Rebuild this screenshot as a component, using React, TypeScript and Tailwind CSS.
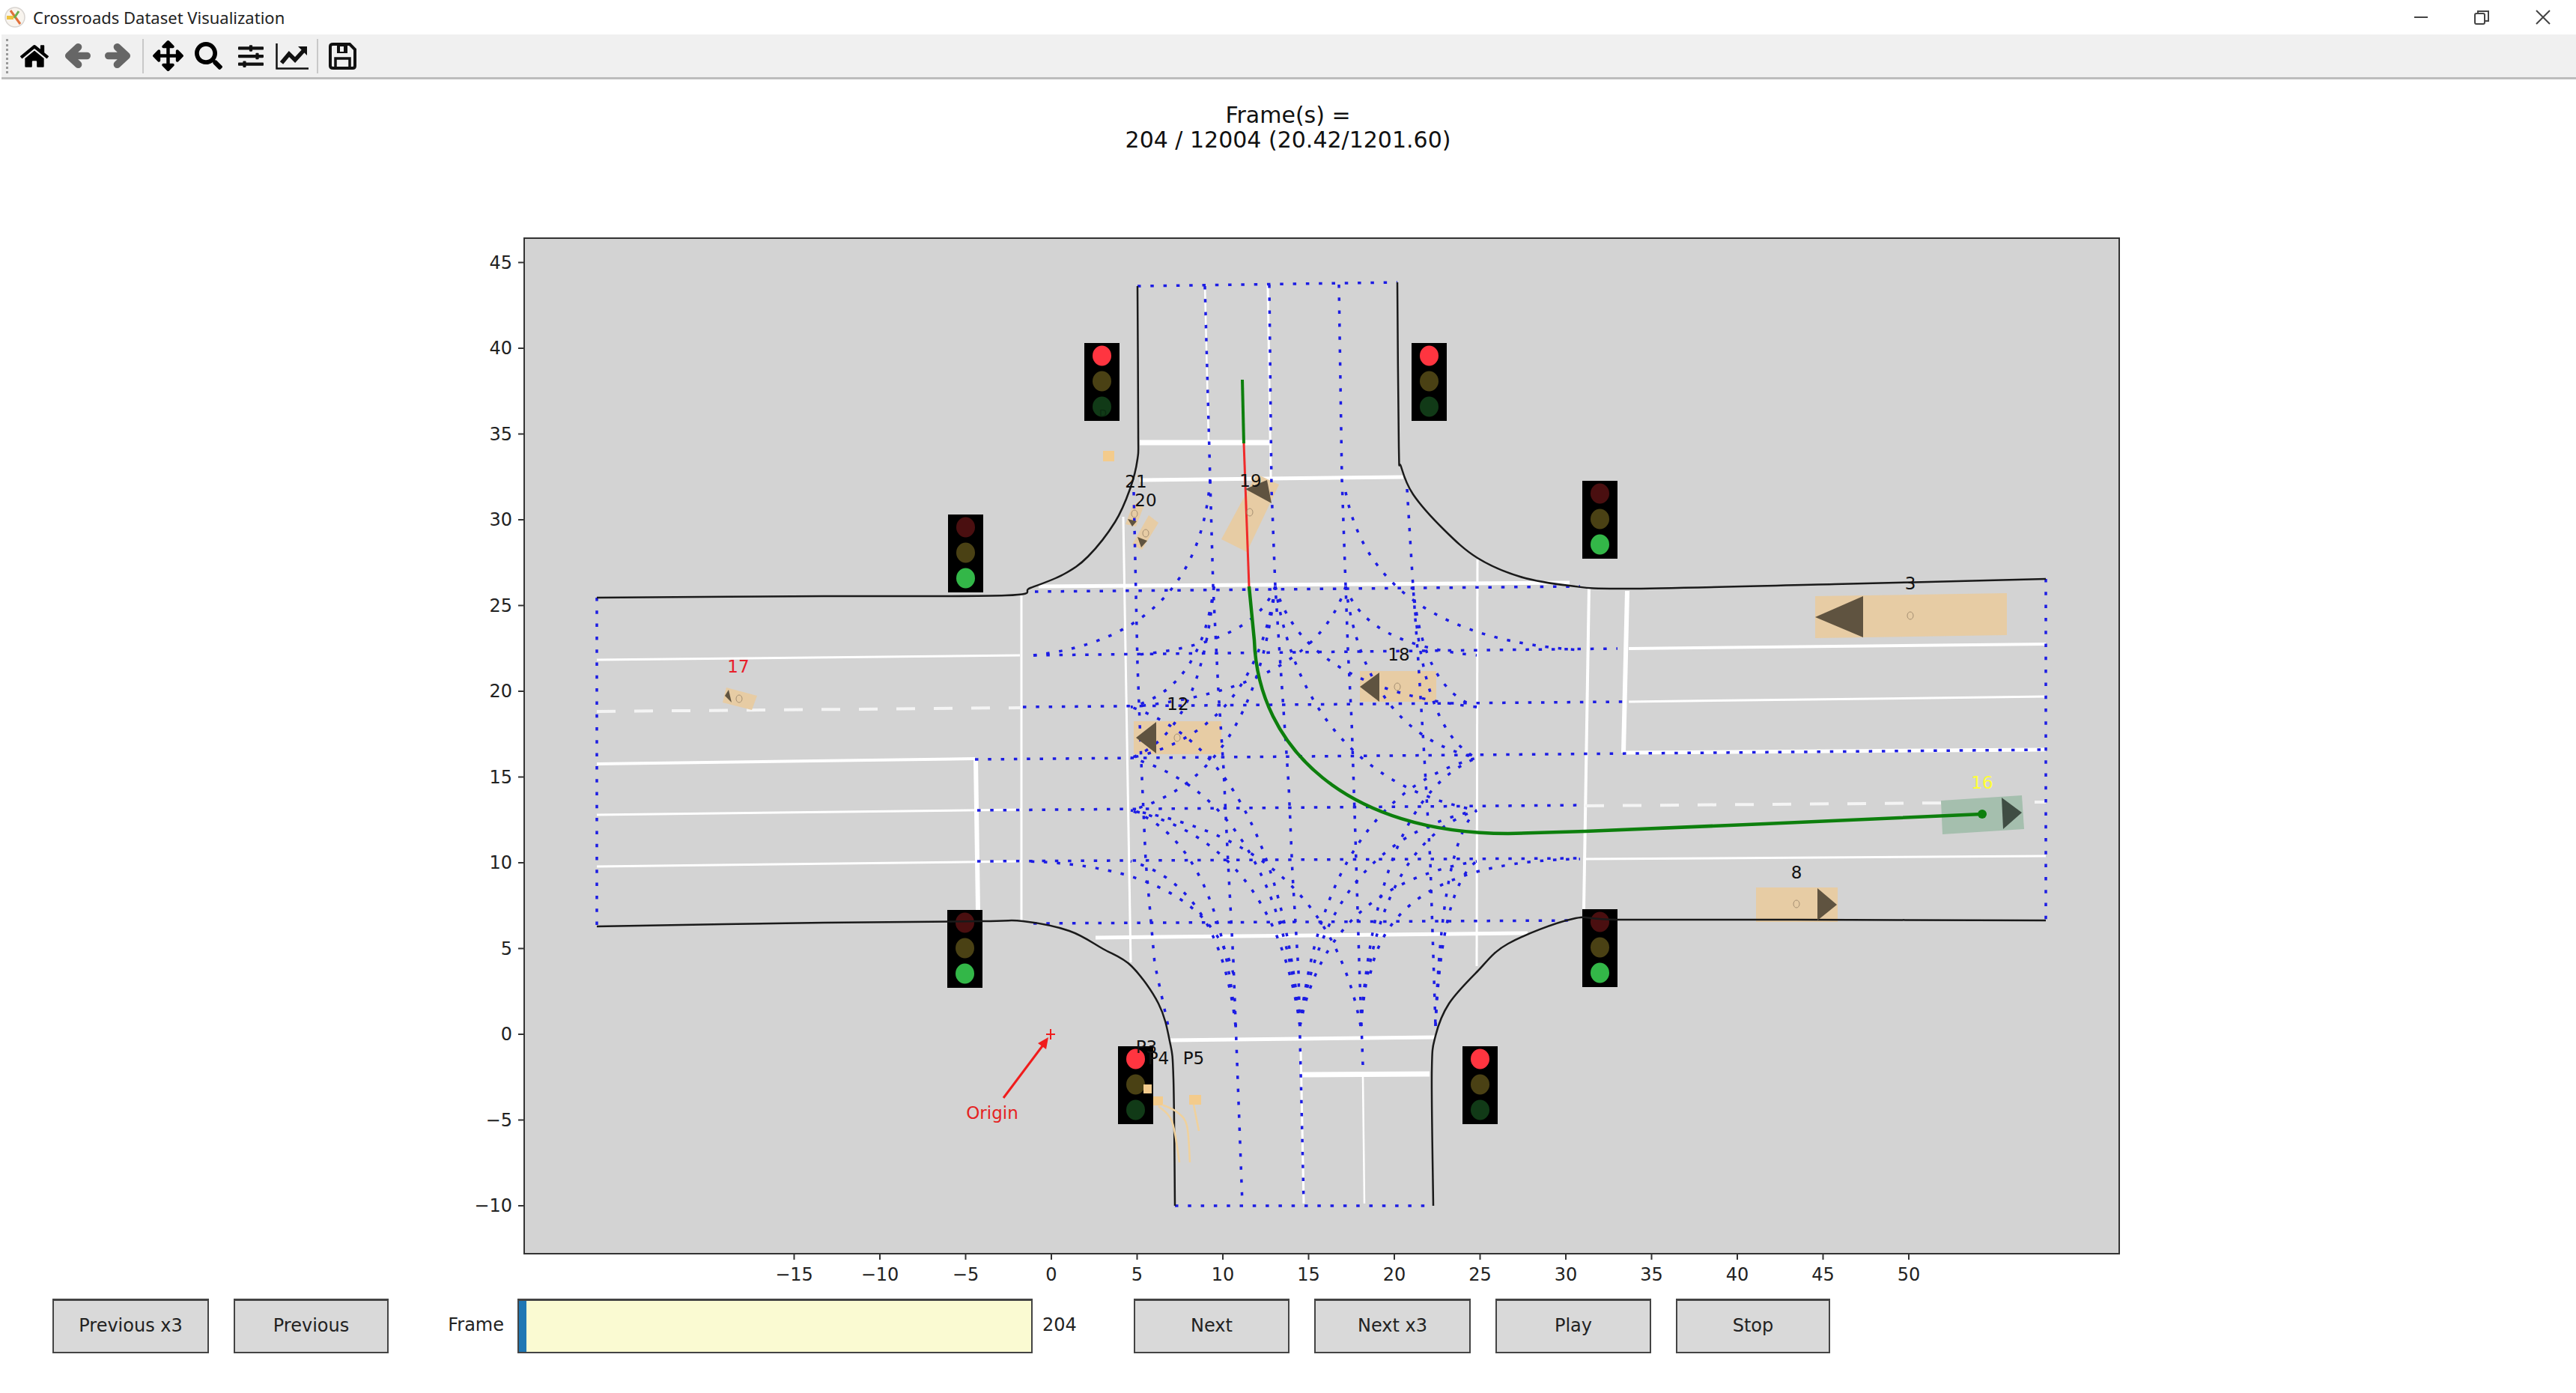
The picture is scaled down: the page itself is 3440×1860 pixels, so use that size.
import { FaHome, FaArrowsAlt, FaSearch, FaSlidersH } from "react-icons/fa";

type P = [number, number];

// plot coords are page pixels, the svg viewBox starts at 620,300
const toX = (v: number) => 1404 + 22.9 * v;
const toY = (v: number) => 1381 - 22.9 * v;

function smooth(pts: P[]) {
  let d = `M${pts[0][0]} ${pts[0][1]}`;
  for (let i = 0; i < pts.length - 1; i++) {
    const p0 = pts[Math.max(0, i - 1)];
    const p1 = pts[i];
    const p2 = pts[i + 1];
    const p3 = pts[Math.min(pts.length - 1, i + 2)];
    const c1 = [p1[0] + (p2[0] - p0[0]) / 6, p1[1] + (p2[1] - p0[1]) / 6];
    const c2 = [p2[0] - (p3[0] - p1[0]) / 6, p2[1] - (p3[1] - p1[1]) / 6];
    d += ` C${c1[0]} ${c1[1]} ${c2[0]} ${c2[1]} ${p2[0]} ${p2[1]}`;
  }
  return d;
}

const borders: P[][] = [
  [[797, 798], [1100, 796], [1343, 795], [1376, 785], [1420, 767], [1453, 743], [1489, 697], [1509, 653], [1519, 613], [1520, 573], [1519, 382]],
  [[1866, 377], [1868, 597], [1871, 623], [1887, 660], [1928, 707], [1973, 745], [2030, 770], [2096, 782], [2173, 786], [2450, 780], [2732, 773]],
  [[797, 1237], [1100, 1232], [1313, 1230], [1366, 1230], [1428, 1243], [1473, 1267], [1511, 1290], [1547, 1340], [1562, 1390], [1567, 1440], [1569, 1610]],
  [[2732, 1229], [2400, 1228], [2161, 1228], [2100, 1227], [2014, 1260], [1973, 1297], [1935, 1340], [1917, 1383], [1912, 1433], [1914, 1610]],
];

// x1 y1 x2 y2 width
const whites: number[][] = [
  [797, 881, 1362, 875, 3], [797, 1020, 1302, 1013, 4], [797, 1088, 1365, 1081, 3], [797, 1157, 1365, 1150, 3],
  [2175, 866, 2732, 860, 4], [2175, 937, 2732, 930, 3], [2168, 1005, 2732, 1001, 5], [2115, 1147, 2732, 1143, 3],
  [1364, 793, 1364, 1230, 3], [1303, 1013, 1306, 1215, 6], [1500, 690, 1510, 1285, 3], [1973, 747, 1972, 1290, 3],
  [2122, 784, 2115, 1214, 4], [2173, 789, 2168, 1005, 6],
  [1522, 591, 1695, 591, 7], [1522, 641, 1874, 637, 5], [1387, 783, 2096, 778, 5], [1463, 1252, 2040, 1246, 5],
  [1562, 1389, 1917, 1385, 5], [1736, 1435, 1909, 1434, 7],
  [1609, 380, 1614, 590, 2.5], [1693, 380, 1697, 637, 3], [1737, 1400, 1741, 1607, 3], [1820, 1438, 1822, 1607, 2.5],
];
const dashed: number[][] = [
  [797, 950, 1364, 945],
  [2117, 1076, 2732, 1071],
];

const q = (a: P, b: P, c: P) => `M${a[0]} ${a[1]} Q${b[0]} ${b[1]} ${c[0]} ${c[1]}`;
// bend from a vertical lane into a horizontal one
const bend = (a: P, b: P) => q(a, [a[0] * 0.85 + b[0] * 0.15, b[1] * 0.85 + a[1] * 0.15], b);

const blueStraight = [
  "M797 798 L797 1237", "M2732 773 L2732 1229", "M1519 382 L1866 377", "M1569 1610 L1914 1610",
  "M1382 790 L2110 783", "M1380 875 L2160 866", "M1366 944 L2168 937", "M1302 1014 L2732 1001",
  "M1305 1082 L2117 1075", "M1305 1150 L2113 1146", "M1380 1233 L2102 1229",
  "M1514 657 L1519 887 L1524 1017 L1530 1150 L1542 1287 L1560 1370",
  "M1609 382 L1616 640 L1620 783 L1627 922 L1634 1027 L1639 1133 L1647 1283 L1659 1607",
  "M1695 380 L1698 653 L1703 783 L1708 860 L1721 1050 L1726 1167 L1734 1297 L1741 1607",
  "M1788 380 L1792 640 L1797 783 L1800 867 L1805 963 L1810 1117 L1815 1283 L1820 1423",
  "M1879 653 L1887 783 L1894 883 L1902 1010 L1910 1150 L1917 1370",
];

const n2: P = [1621, 783];
const n3: P = [1703, 783];
const n4: P = [1797, 783];
const n5: P = [1887, 783];
const s2: P = [1650, 1370];
const s3: P = [1736, 1370];
const s4: P = [1817, 1370];
const s5: P = [1917, 1370];
const wIn = (y: number): P => [1510, y];
const eIn = (y: number): P => [1972, y];

const blueCurves = [
  // wide corners that start on the arms
  q([1616, 640], [1600, 850], [1380, 875]),
  q([1797, 657], [1835, 850], [2110, 868]),
  q([1647, 1300], [1610, 1155], [1366, 1150]),
  q([1830, 1300], [1860, 1150], [2110, 1147]),
  // inner paths, north
  bend(n2, wIn(944)), bend(n2, wIn(1012)), bend(n3, wIn(875)), bend(n3, wIn(1012)), bend(n3, wIn(1082)),
  bend(n4, wIn(944)), bend(n4, eIn(875)), bend(n4, eIn(1012)), bend(n3, eIn(944)), bend(n3, eIn(1082)),
  bend(n5, eIn(944)), bend(n5, eIn(1012)),
  // inner paths, south
  bend(s2, wIn(1150)), bend(s2, wIn(1082)), bend(s3, wIn(1012)), bend(s3, wIn(1082)), bend(s3, wIn(944)),
  bend(s3, eIn(1012)), bend(s3, eIn(1082)), bend(s3, eIn(1150)), bend(s4, eIn(1082)), bend(s4, eIn(1012)),
  bend(s4, wIn(1082)), bend(s5, eIn(1150)), bend(s5, eIn(1082)),
];

const vehicles: { body: string; arrow: string; dot: P; label: string; at: P; color?: string; bodyFill?: string; arrowFill?: string }[] = [
  { body: "2424,796 2680,792 2680,848 2424,852", arrow: "2424,824 2488,796 2488,851", dot: [2551, 822], label: "3", at: [2551, 779] },
  { body: "2345,1185 2454,1185 2454,1231 2345,1231", arrow: "2453,1208 2427,1186 2427,1229", dot: [2399, 1207], label: "8", at: [2399, 1165] },
  { body: "1816,896 1918,896 1918,937 1816,937", arrow: "1816,917 1842,898 1842,937", dot: [1866, 917], label: "18", at: [1868, 874] },
  { body: "1514,963 1631,963 1631,1007 1514,1007", arrow: "1517,985 1544,964 1544,1006", dot: [1572, 985], label: "12", at: [1573, 940] },
  { body: "1678,633 1708,647 1665,737 1631,720", arrow: "1692,641 1663,653 1698,672", dot: [1669, 684], label: "19", at: [1670, 642] },
  { body: "1513,673 1527,677 1517,703 1503,700", arrow: "1512,703 1506,693 1518,696", dot: [1515, 686], label: "21", at: [1517, 643] },
  { body: "1534,688 1547,698 1525,734 1512,727", arrow: "1524,731 1519,717 1532,722", dot: [1530, 712], label: "20", at: [1530, 668] },
  { body: "970,918 1011,929 1004,948 965,938", arrow: "973,921 968,929 977,938", dot: [987, 933], label: "17", at: [986, 890], color: "#e8202a" },
  {
    body: "2592,1069 2700,1062 2703,1107 2594,1114", arrow: "2700,1085 2673,1065 2675,1107", dot: [2647, 1087], label: "16", at: [2647, 1045],
    color: "#ffff33", bodyFill: "#a5bfae", arrowFill: "#3f4d43",
  },
];

const lights: { x: number; y: number; on: "r" | "g" }[] = [
  { x: 1448, y: 458, on: "r" }, { x: 1885, y: 458, on: "r" }, { x: 1266, y: 687, on: "g" }, { x: 2113, y: 642, on: "g" },
  { x: 1265, y: 1215, on: "g" }, { x: 2113, y: 1214, on: "g" }, { x: 1493, y: 1397, on: "r" }, { x: 1953, y: 1397, on: "r" },
];

function TrafficLight({ x, y, on }: { x: number; y: number; on: "r" | "g" }) {
  return (
    <g>
      <rect x={x} y={y} width={47} height={104} fill="#000" />
      <ellipse cx={x + 23.5} cy={y + 17} rx={12.5} ry={13.5} fill={on === "r" ? "#ff3540" : "#4a0f10"} />
      <ellipse cx={x + 23.5} cy={y + 51} rx={12.5} ry={13.5} fill="#4a4114" />
      <ellipse cx={x + 23.5} cy={y + 85} rx={12.5} ry={13.5} fill={on === "g" ? "#33b748" : "#113a17"} />
    </g>
  );
}

function CrossroadsPlot() {
  return (
    <svg viewBox="620 300 2240 1420" className="w-[2240px] h-[1420px] ml-[620px] mt-[97px] shrink-0">
      <rect x={700} y={318} width={2130} height={1356} fill="#d3d3d3" />

      {whites.map((l, i) => (
        <line key={i} x1={l[0]} y1={l[1]} x2={l[2]} y2={l[3]} stroke="#fff" strokeWidth={l[4]} />
      ))}
      {dashed.map((l, i) => (
        <line key={i} x1={l[0]} y1={l[1]} x2={l[2]} y2={l[3]} stroke="#f4f4f4" strokeWidth={4} strokeDasharray="25 25" />
      ))}

      {lights.map((l, i) => (
        <TrafficLight key={i} {...l} />
      ))}
      <text x={1473} y={556} fontSize={13} fill="#0a2a10" textAnchor="middle">D</text>

      {vehicles.map((v) => (
        <polygon key={v.label} points={v.body} fill={v.bodyFill ?? "#e7cca4"} />
      ))}

      {blueStraight.concat(blueCurves).map((d, i) => (
        <path key={i} d={d} fill="none" stroke="#1c1ce4" strokeWidth={3.5} strokeDasharray="4.5 12.8" />
      ))}

      {borders.map((b, i) => (
        <path key={i} d={smooth(b)} fill="none" stroke="#1a1a1a" strokeWidth={2.5} />
      ))}

      <path d="M1659 507 L1661 592" stroke="#0d7f0d" strokeWidth={4} fill="none" />
      <path d="M1661 592 L1668 783" stroke="#f02a2a" strokeWidth={3} fill="none" />
      <path d="M1668 783 L1675 855 C1680 1000 1800 1113 2014 1113 L2117 1110 L2357 1100 L2647 1087" stroke="#0d7f0d" strokeWidth={4.5} fill="none" />

      {vehicles.map((v) => (
        <g key={v.label}>
          <polygon points={v.arrow} fill={v.arrowFill ?? "#5f5340"} />
          {v.label === "16" ? (
            <circle cx={v.dot[0]} cy={v.dot[1]} r={6} fill="#0d7f0d" />
          ) : (
            <ellipse cx={v.dot[0]} cy={v.dot[1]} rx={4} ry={5} fill="none" stroke="#a58f72" strokeWidth={1} />
          )}
          <text x={v.at[0]} y={v.at[1] + 8} fontSize={23} textAnchor="middle" fill={v.color ?? "#111"}>{v.label}</text>
        </g>
      ))}

      {/* pedestrians */}
      <g fill="#f3cb8c">
        <rect x={1473} y={602} width={15} height={14} />
        <rect x={1527} y={1448} width={11} height={12} />
        <rect x={1540} y={1464} width={13} height={12} />
        <rect x={1588} y={1462} width={16} height={13} />
      </g>
      <g fill="none" stroke="#f0d19c" strokeWidth={2.5}>
        <path d={smooth([[1547, 1477], [1565, 1497], [1575, 1552]])} />
        <path d={smooth([[1552, 1475], [1572, 1485], [1585, 1503], [1589, 1552]])} />
        <path d="M1594 1475 L1601 1510" />
      </g>
      <g fontSize={23} fill="#111" textAnchor="middle">
        <text x={1531} y={1406}>P3</text>
        <text x={1547} y={1421}>P4</text>
        <text x={1594} y={1421}>P5</text>
      </g>

      {/* origin marker */}
      <g stroke="#f01c1c" fill="none">
        <path d="M1397 1381 L1409 1381 M1403 1374 L1403 1388" strokeWidth={2} />
        <path d="M1340 1466 L1397 1390" strokeWidth={3} />
      </g>
      <polygon points="1400,1385 1397,1401 1386,1393" fill="#f01c1c" />
      <text x={1325} y={1494} fontSize={23} textAnchor="middle" fill="#e52222">Origin</text>

      <rect x={700} y={318} width={2130} height={1356} fill="none" stroke="#333" strokeWidth={2} />

      {[-10, -5, 0, 5, 10, 15, 20, 25, 30, 35, 40, 45].map((v) => (
        <g key={v}>
          <line x1={692} x2={700} y1={toY(v)} y2={toY(v)} stroke="#333" strokeWidth={2} />
          <text x={684} y={toY(v) + 8} fontSize={24} textAnchor="end" fill="#222">{v < 0 ? `\u2212${-v}` : v}</text>
        </g>
      ))}
      {[-15, -10, -5, 0, 5, 10, 15, 20, 25, 30, 35, 40, 45, 50].map((v) => (
        <g key={v}>
          <line x1={toX(v)} x2={toX(v)} y1={1674} y2={1682} stroke="#333" strokeWidth={2} />
          <text x={toX(v)} y={1710} fontSize={24} textAnchor="middle" fill="#222">{v < 0 ? `\u2212${-v}` : v}</text>
        </g>
      ))}
    </svg>
  );
}

function PlotButton({ label, width, gap }: { label: string; width: string; gap: string }) {
  return (
    <button className={`${width} ${gap} h-full pb-[3px] bg-[#d9d9d9] border-x-2 border-t-[3px] border-b-2 border-[#444] text-[24px] text-[#222]`}>
      {label}
    </button>
  );
}

function AppIcon() {
  return (
    <svg viewBox="0 0 28 28" className="w-[28px] h-[28px]">
      <circle cx="14" cy="14" r="13" fill="#f8f4ee" stroke="#d8d4d0" strokeWidth="1.5" />
      <path d="M8 5 L21 23" stroke="#e2703a" strokeWidth="3" />
      <path d="M19 6 L13 15" stroke="#6cb04c" strokeWidth="3" />
      <rect x="3" y="12" width="9" height="5" fill="#eec23e" />
    </svg>
  );
}

function ArrowIcon({ flip }: { flip?: boolean }) {
  return (
    <svg viewBox="0 0 36 36" className={flip ? "w-[35px] h-[35px] -scale-x-100" : "w-[35px] h-[35px]"}>
      <path d="M31 18 H8 M19 6 L6 18 L19 30" fill="none" stroke="#666" strokeWidth="10" strokeLinecap="round" strokeLinejoin="round" />
    </svg>
  );
}

function ChartIcon() {
  return (
    <svg viewBox="0 0 44 36" className="w-[44px] h-[36px]">
      <path d="M1.5 1 V34.5 H44" fill="none" stroke="#111" strokeWidth="2.5" />
      <path d="M8 27 L18 15 L26 23 L37 11" fill="none" stroke="#111" strokeWidth="5.5" />
      <polygon points="30,5 42,5 42,17" fill="#111" />
    </svg>
  );
}

function SaveIcon() {
  return (
    <svg viewBox="0 0 37 36" className="w-[37px] h-[36px]">
      <path d="M6 2 H28 L35 9 V31 Q35 34 32 34 H6 Q2 34 2 31 V5 Q2 2 6 2 Z" fill="none" stroke="#111" strokeWidth="4" />
      <rect x="11" y="3" width="14" height="11" fill="#111" />
      <rect x="15" y="5" width="5" height="7" fill="#f0f0f0" />
      <rect x="9" y="21" width="19" height="13" fill="none" stroke="#111" strokeWidth="3.5" />
    </svg>
  );
}

export default function App() {
  return (
    <div className="w-[3440px] h-[1860px] bg-white flex flex-col overflow-hidden font-['DejaVu_Sans',sans-serif]">
      {/* window title bar */}
      <div className="h-[46px] shrink-0 flex items-center pl-[6px]">
        <AppIcon />
        <span className="ml-[10px] text-[22px] text-[#222] font-['Noto_Sans',sans-serif]">Crossroads Dataset Visualization</span>
        <div className="ml-auto flex items-center text-[#333]">
          <svg viewBox="0 0 20 20" className="w-[20px] h-[20px] mr-[61px]">
            <path d="M1 10 H19" stroke="#444" strokeWidth="2" />
          </svg>
          <svg viewBox="0 0 20 20" className="w-[20px] h-[20px] mr-[62px]">
            <rect x="1" y="5" width="13" height="14" fill="none" stroke="#444" strokeWidth="2" rx="2" />
            <path d="M5 5 V2 H19 V15 H14" fill="none" stroke="#444" strokeWidth="2" />
          </svg>
          <svg viewBox="0 0 20 20" className="w-[20px] h-[20px] mr-[34px]">
            <path d="M1 1 L19 19 M19 1 L1 19" stroke="#444" strokeWidth="2" />
          </svg>
        </div>
      </div>

      {/* matplotlib toolbar */}
      <div className="h-[60px] shrink-0 ml-[2px] bg-[#f0f0f0] border-b-[3px] border-[#bdbdbd] flex items-center">
        <div className="w-[4px] h-[46px] ml-[6px] border-l-[3px] border-dotted border-[#999]" />
        <div className="w-[56px] ml-[6px] flex justify-center"><FaHome className="w-[38px] h-[36px] text-black" /></div>
        <div className="w-[58px] flex justify-center"><ArrowIcon /></div>
        <div className="w-[50px] flex justify-center"><ArrowIcon flip /></div>
        <div className="w-[2px] h-[46px] ml-[8px] bg-[#c8c8c8]" />
        <div className="w-[56px] ml-[4px] flex justify-center"><FaArrowsAlt className="w-[41px] h-[41px] text-black" /></div>
        <div className="w-[52px] flex justify-center"><FaSearch className="w-[37px] h-[37px] text-black" /></div>
        <div className="w-[62px] flex justify-center"><FaSlidersH className="w-[36px] h-[34px] text-[#111]" /></div>
        <div className="w-[48px] flex justify-center"><ChartIcon /></div>
        <div className="w-[2px] h-[46px] ml-[9px] bg-[#c8c8c8]" />
        <div className="w-[56px] ml-[4px] flex justify-center"><SaveIcon /></div>
      </div>

      {/* figure */}
      <div className="flex-1 flex flex-col">
        <div className="pt-[31px] text-center text-[30px] leading-[33px] text-[#111]">
          <div>Frame(s) =</div>
          <div>204 / 12004 (20.42/1201.60)</div>
        </div>
        <CrossroadsPlot />
        <div className="h-[73px] mt-[14px] flex pl-[70px] shrink-0">
          <PlotButton label="Previous x3" width="w-[209px]" gap="" />
          <PlotButton label="Previous" width="w-[207px]" gap="ml-[33px]" />
          <div className="w-[172px] pr-[18px] pb-[3px] flex items-center justify-end text-[24px] text-[#222]">Frame</div>
          <div className="w-[688px] h-full flex border-x-2 border-t-[3px] border-b-2 border-[#444] bg-[#fafad2]">
            <div className="w-[10px] bg-[#1f77b4]" />
          </div>
          <div className="w-[135px] pl-[13px] pb-[3px] flex items-center text-[24px] text-[#222]">204</div>
          <PlotButton label="Next" width="w-[208px]" gap="" />
          <PlotButton label="Next x3" width="w-[209px]" gap="ml-[33px]" />
          <PlotButton label="Play" width="w-[208px]" gap="ml-[33px]" />
          <PlotButton label="Stop" width="w-[206px]" gap="ml-[33px]" />
        </div>
      </div>
    </div>
  );
}
